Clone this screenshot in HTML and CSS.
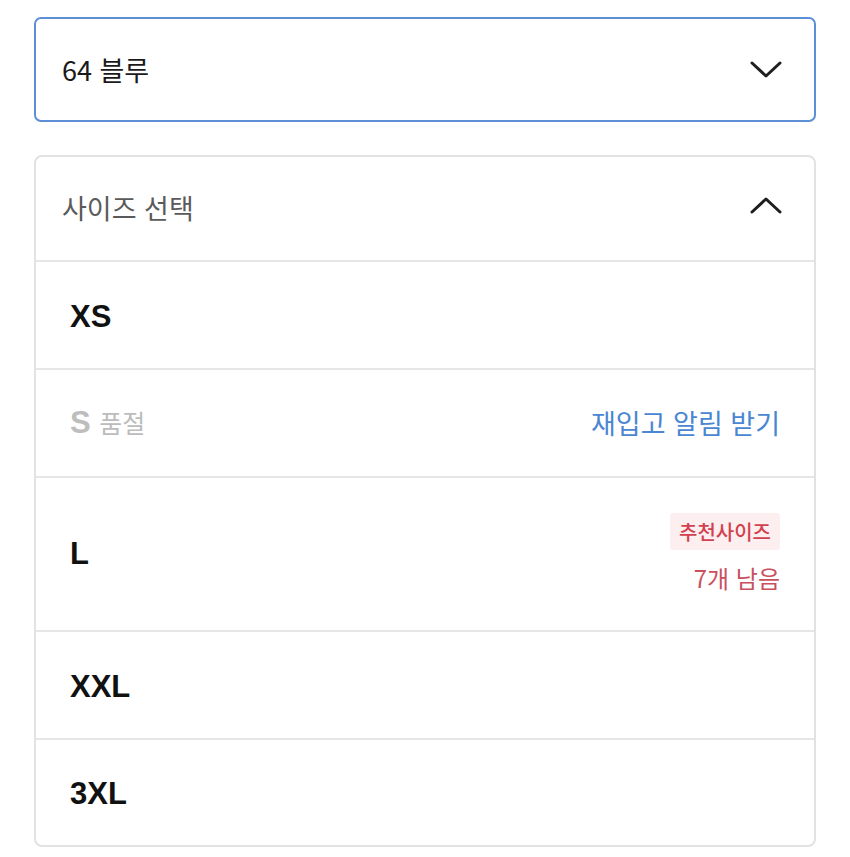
FILE: index.html
```html
<!DOCTYPE html>
<html lang="ko">
<head>
  <meta charset="UTF-8">
  <title>옵션 선택</title>
  <link rel="stylesheet" href="styles.css">
</head>
<body>

  <div class="option-panel">
    <!-- Color select -->
    <div class="select-box">
      <span class="select-value">64 블루</span>
      <svg class="chevron" width="32" height="18" viewBox="0 0 32 18">
        <path d="M2 2 L16 15 L30 2" fill="none" stroke="#1e1e1e" stroke-width="3" stroke-linecap="round" stroke-linejoin="round"/>
      </svg>
    </div>

    <!-- Size list -->
    <div class="size-list">
      <div class="size-header">
        <span class="size-title">사이즈 선택</span>
        <svg class="chevron up" width="32" height="18" viewBox="0 0 32 18">
          <path d="M2 15 L16 2 L30 15" fill="none" stroke="#1e1e1e" stroke-width="3" stroke-linecap="round" stroke-linejoin="round"/>
        </svg>
      </div>

      <div class="size-row">
        <span class="size-name">XS</span>
      </div>

      <div class="size-row soldout">
        <span class="size-name">S <em>품절</em></span>
        <a class="restock" href="#">재입고 알림 받기</a>
      </div>

      <div class="size-row tall">
        <span class="size-name">L</span>
        <div class="size-info">
          <span class="badge">추천사이즈</span>
          <span class="stock">7개 남음</span>
        </div>
      </div>

      <div class="size-row">
        <span class="size-name">XXL</span>
      </div>

      <div class="size-row last">
        <span class="size-name">3XL</span>
      </div>
    </div>
  </div>

</body>
</html>
```

FILE: styles.css
```css
* { box-sizing: border-box; }

body {
  margin: 0;
  background: #fff;
  font-family: "Noto Sans CJK KR", "Noto Sans", sans-serif;
  color: #1e1e1e;
}

.option-panel {
  width: 782px;
  margin: 17px 0 0 34px;
}

/* Color select */
.select-box {
  height: 105px;
  border: 2px solid #5d8fd6;
  border-radius: 7px;
  display: flex;
  align-items: center;
  justify-content: space-between;
  padding: 0 32px 0 26px;
}

.select-value {
  font-size: 27px;
  color: #1a1a1a;
}

.chevron { display: block; }
.chevron.up { margin-top: -4px; }

/* Size list */
.size-list {
  margin-top: 33px;
  border: 2px solid #e2e2e2;
  border-radius: 8px;
}

.size-header {
  height: 105px;
  display: flex;
  align-items: center;
  justify-content: space-between;
  padding: 0 32px 2px 26px;
  border-bottom: 2px solid #e6e6e6;
}

.size-title {
  font-size: 27px;
  color: #5a5a5a;
}

.size-row {
  height: 108px;
  display: flex;
  align-items: center;
  justify-content: space-between;
  padding: 3px 34px 0;
  border-bottom: 2px solid #e6e6e6;
}

.size-row.soldout { padding-top: 0; padding-bottom: 2px; }
.size-row.tall { height: 154px; padding-top: 0; }
.size-row.last { border-bottom: none; height: 105px; }

.size-name {
  font-family: "Liberation Sans", Arial, sans-serif;
  font-weight: bold;
  font-size: 31px;
  color: #111;
}

.soldout .size-name { color: #bdbdbd; }

.soldout em {
  font-style: normal;
  font-weight: normal;
  font-family: "Noto Sans CJK KR", sans-serif;
  font-size: 25px;
  color: #bcbcbc;
}

.restock {
  font-size: 27px;
  color: #4a86d2;
  text-decoration: none;
}

.size-info {
  display: flex;
  flex-direction: column;
  align-items: flex-end;
  gap: 10px;
}

.badge {
  background: #fdeef0;
  color: #d2414f;
  font-size: 20px;
  font-weight: 500;
  padding: 4px 9px;
  border-radius: 3px;
}

.stock {
  font-size: 24px;
  color: #c9515f;
}
```
